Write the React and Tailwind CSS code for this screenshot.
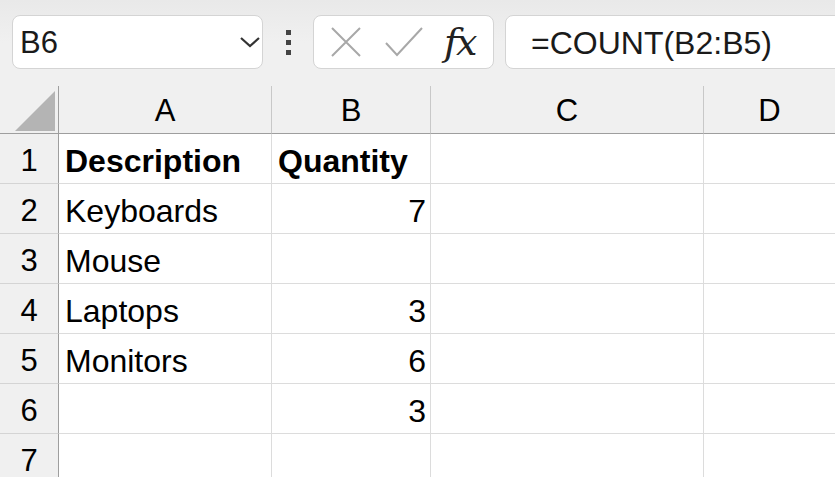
import React from "react";

const font = { fontFamily: '"Liberation Sans", Arial, sans-serif' };

const rows = [
  ["Description", "Quantity", true],
  ["Keyboards", "7"],
  ["Mouse", ""],
  ["Laptops", "3"],
  ["Monitors", "6"],
  ["", "3"],
  ["", ""],
];

export default function App() {
  return (
    <div className="w-[835px] h-[477px] overflow-hidden bg-[#f0f0f0] text-black" style={font}>
      {/* toolbar */}
      <div className="h-[86px] flex items-start pt-[15px] pl-[12px] bg-gradient-to-b from-[#e9e9e9] via-[#f0f0f0] to-[#f0f0f0]">
        <div className="shrink-0 w-[251px] h-[54px] bg-white border border-[#d4d4d4] rounded-[8px] flex items-center justify-between pl-[7px] pr-[1px]">
          <span className="text-[31px] text-[#1a1a1a] leading-none">B6</span>
          <svg width="22" height="14" viewBox="0 0 22 14" fill="none">
            <path d="M2 3 L11 11 L20 3" stroke="#333" strokeWidth="2.2" />
          </svg>
        </div>
        <div className="shrink-0 w-[50px] h-[54px] flex flex-col items-center justify-center gap-[5px]">
          <div className="w-[5px] h-[5px] bg-[#444]" />
          <div className="w-[5px] h-[5px] bg-[#444]" />
          <div className="w-[5px] h-[5px] bg-[#444]" />
        </div>
        <div className="shrink-0 w-[181px] h-[54px] bg-white border border-[#d4d4d4] rounded-[8px] flex items-center pl-[16px]">
          <svg width="32" height="32" viewBox="0 0 32 32" fill="none">
            <path d="M2 2 L30 30 M30 2 L2 30" stroke="#a8a8a8" strokeWidth="2" />
          </svg>
          <svg width="40" height="32" viewBox="0 0 40 32" fill="none" className="ml-[22px]">
            <path d="M2 17 L13 29 L38 2" stroke="#a8a8a8" strokeWidth="2" />
          </svg>
          <span className="ml-[20px] text-[38px] italic leading-none text-[#222]" style={{ fontFamily: '"DejaVu Serif", "Liberation Serif", serif' }}>
            <span className="tracking-[-2px]">f</span>x
          </span>
        </div>
        <div className="shrink-0 ml-[11px] w-[360px] h-[54px] bg-white border border-[#d4d4d4] rounded-[8px] flex items-center pl-[25px] pt-[2px]">
          <span className="text-[32px] leading-none text-[#1a1a1a]">=COUNT(B2:B5)</span>
        </div>
      </div>

      {/* grid */}
      <div className="grid grid-cols-[59px_213px_159px_273px_1fr] grid-rows-[48px_repeat(7,50px)]">
        <div className="relative border-r border-b border-[#9e9e9e] bg-[#f0f0f0]">
          <svg className="absolute left-[15px] top-[5px]" width="40" height="40" viewBox="0 0 40 40">
            <polygon points="40,0 40,40 0,40" fill="#b4b4b4" />
          </svg>
        </div>
        {["A", "B", "C", "D"].map((c, i) => (
          <div
            key={c}
            className={`flex items-center justify-center pt-[3px] text-[31px] border-b border-[#9e9e9e] bg-[#f0f0f0] ${i < 3 ? "border-r border-r-[#c8c8c8]" : ""}`}
          >
            {c}
          </div>
        ))}
        {rows.map((r, i) => (
          <React.Fragment key={i}>
            <div className="flex items-center justify-center pt-[6px] text-[31px] bg-[#f0f0f0] border-r border-[#9e9e9e] border-b border-b-[#d4d4d4]">
              {i + 1}
            </div>
            <div className={`flex items-center pl-[6px] pt-[4px] text-[32px] bg-white border-r border-b border-[#dcdcdc] ${r[2] ? "font-bold" : ""}`}>
              {r[0]}
            </div>
            <div className={`flex items-center pt-[4px] text-[32px] bg-white border-r border-b border-[#dcdcdc] ${r[2] ? "font-bold pl-[6px] justify-start" : "justify-end pr-[4px]"}`}>
              {r[1]}
            </div>
            <div className="bg-white border-r border-b border-[#dcdcdc]" />
            <div className="bg-white border-b border-[#dcdcdc]" />
          </React.Fragment>
        ))}
      </div>
    </div>
  );
}
